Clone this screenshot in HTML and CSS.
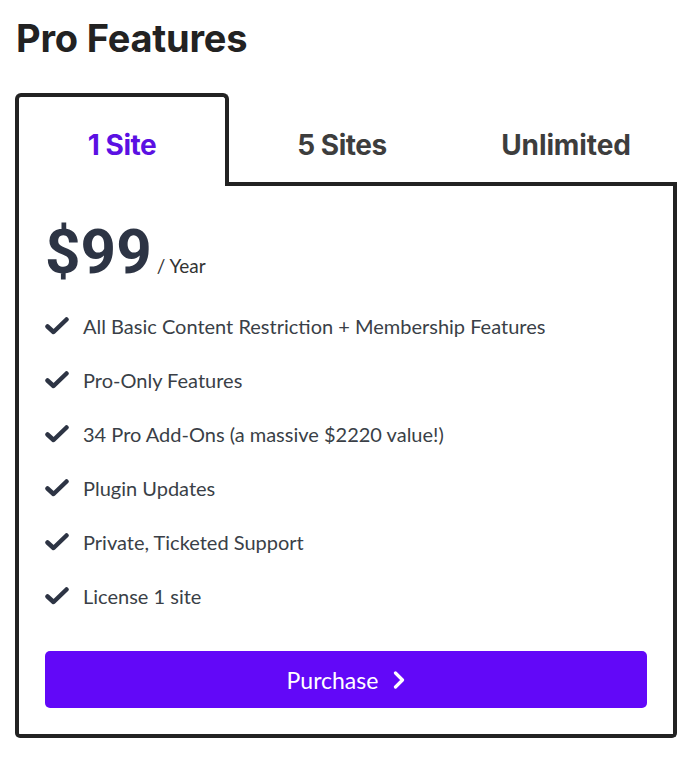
FILE: index.html
```html
<!DOCTYPE html>
<html lang="en">
<head>
    <meta charset="UTF-8">
    <meta name="viewport" content="width=device-width, initial-scale=1.0">
    <title>Pro Features</title>
    <link rel="stylesheet" href="styles.css">
</head>
<body>
    <h1 class="page-title">Pro Features</h1>

    <div class="pricing">
        <!-- Plan tabs -->
        <div class="tabs">
            <div class="tab active">1 Site</div>
            <div class="tab tab-five">5 Sites</div>
            <div class="tab tab-unlimited">Unlimited</div>
        </div>

        <!-- Selected plan -->
        <div class="panel">
            <div class="price">
                <span class="amount">$99</span>
                <span class="period">/ Year</span>
            </div>

            <ul class="features">
                <li><svg class="check" viewBox="0 0 24 20"><path d="M2.5 10.5 L8.5 16 L21.5 3.5"/></svg>All Basic Content Restriction + Membership Features</li>
                <li><svg class="check" viewBox="0 0 24 20"><path d="M2.5 10.5 L8.5 16 L21.5 3.5"/></svg>Pro-Only Features</li>
                <li><svg class="check" viewBox="0 0 24 20"><path d="M2.5 10.5 L8.5 16 L21.5 3.5"/></svg>34 Pro Add-Ons (a massive $2220 value!)</li>
                <li><svg class="check" viewBox="0 0 24 20"><path d="M2.5 10.5 L8.5 16 L21.5 3.5"/></svg>Plugin Updates</li>
                <li><svg class="check" viewBox="0 0 24 20"><path d="M2.5 10.5 L8.5 16 L21.5 3.5"/></svg>Private, Ticketed Support</li>
                <li><svg class="check" viewBox="0 0 24 20"><path d="M2.5 10.5 L8.5 16 L21.5 3.5"/></svg>License 1 site</li>
            </ul>

            <button class="purchase-btn">Purchase <svg class="chevron" viewBox="0 0 12 18"><path d="M2.5 2 L9.5 9 L2.5 16"/></svg></button>
        </div>
    </div>
</body>
</html>
```

FILE: styles.css
```css
body {
    margin: 0;
    padding: 0 17px 0 15px;
    background-color: white;
    font-family: Lato, "Open Sans", sans-serif;
}

.page-title {
    margin: 0;
    padding: 15px 0 0 1px;
    font-family: Inter, Roboto, sans-serif;
    font-size: 38px;
    font-weight: 700;
    letter-spacing: -0.2px;
    line-height: 46px;
    color: #222;
}

.pricing {
    margin-top: 32px;
}

/* Tabs */
.tabs {
    display: flex;
    height: 93px;
}

.tab {
    box-sizing: border-box;
    display: flex;
    justify-content: center;
    align-items: center;
    padding-top: 14px;
    font-family: Inter, Roboto, sans-serif;
    font-size: 28px;
    font-weight: 700;
    letter-spacing: -0.5px;
    color: #3d3d3d;
    border-bottom: 4px solid #222;
}

.tab.active {
    width: 214px;
    padding-top: 6px;
    color: #5b10e3;
    border: 4px solid #222;
    border-bottom: none;
    border-radius: 6px 6px 0 0;
}

.tab-five {
    width: 226px;
}

.tab-unlimited {
    flex: 1;
    letter-spacing: -0.1px;
}

/* Panel */
.panel {
    border: 4px solid #222;
    border-top: none;
    border-radius: 0 0 5px 5px;
    padding: 30px 26px 26px 26px;
}

.price {
    display: flex;
    align-items: baseline;
    color: #2d3444;
}

.amount {
    font-family: Roboto, Inter, sans-serif;
    font-size: 62px;
    font-weight: 700;
    line-height: 72px;
}

.period {
    margin-left: 5px;
    font-size: 19px;
    color: #333;
}

.features {
    list-style: none;
    margin: 11px 0 0 0;
    padding: 0;
}

.features li {
    display: flex;
    align-items: center;
    height: 54px;
    font-size: 20px;
    color: #3a3f47;
}

.check {
    width: 24px;
    height: 20px;
    margin-right: 14px;
    fill: none;
    stroke: #2d3444;
    stroke-width: 4.5;
    stroke-linecap: round;
    stroke-linejoin: round;
}

.purchase-btn {
    display: flex;
    justify-content: center;
    align-items: center;
    width: 100%;
    height: 57px;
    margin-top: 28px;
    padding-right: 6px;
    border: none;
    border-radius: 5px;
    background-color: #6208f8;
    color: white;
    font-family: Lato, sans-serif;
    font-size: 23px;
    cursor: pointer;
}

.chevron {
    width: 12px;
    height: 18px;
    margin-left: 15px;
    fill: none;
    stroke: white;
    stroke-width: 3.2;
    stroke-linecap: round;
    stroke-linejoin: round;
}
```
